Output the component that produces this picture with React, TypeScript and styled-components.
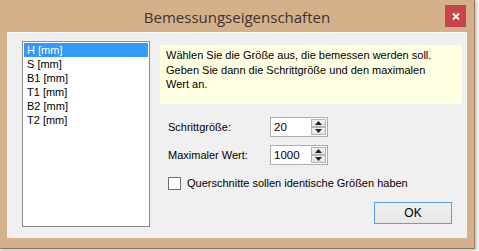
import React from 'react';
import styled, { createGlobalStyle } from 'styled-components';

const GlobalStyle = createGlobalStyle`
  html, body {
    margin: 0;
    padding: 0;
    background: #f3f3f3;
  }
  body {
    width: 479px;
    height: 251px;
    overflow: hidden;
  }
`;

const Window = styled.div`
  width: 474px;
  height: 248px;
  display: flex;
  flex-direction: column;
  background: #d5b18b;
  border-right: 1px solid #8f7a64;
  border-bottom: 1px solid #8f7a64;
  box-shadow: 1px 1px 3px rgba(0, 0, 0, 0.25);
`;

const TitleBar = styled.div`
  height: 32px;
  display: grid;
  grid-template-columns: 1fr auto 1fr;
  align-items: center;
`;

const Title = styled.div`
  grid-column: 2;
  font-family: 'Open Sans', 'Noto Sans', sans-serif;
  font-size: 15px;
  color: #3a3530;
  padding-top: 1px;
`;

const CloseButton = styled.div`
  grid-column: 3;
  justify-self: end;
  align-self: start;
  margin: 5px 8px 0 0;
  width: 21px;
  height: 22px;
  background: #c7464a;
  display: flex;
  align-items: center;
  justify-content: center;
`;

const Client = styled.div`
  flex: 1;
  margin: 0 7px 10px 7px;
  background: #f0f0f0;
  border-top: 1px solid #fbfbfb;
  display: flex;
  padding: 8px 5px 0 15px;
  font-family: 'Liberation Sans', Arial, sans-serif;
  font-size: 11px;
  color: #000;
`;

const ListBox = styled.div`
  width: 126px;
  height: 182px;
  background: #fff;
  border: 1px solid #8c8c8c;
  padding: 1px 0;
`;

const ListItem = styled.div<{ $selected?: boolean }>`
  height: 14px;
  line-height: 14px;
  margin: 0 1px;
  padding-left: 3px;
  background: ${p => (p.$selected ? '#3399ff' : 'transparent')};
  color: ${p => (p.$selected ? '#fff' : '#000')};
`;

const RightColumn = styled.div`
  flex: 1;
  margin-left: 10px;
  display: flex;
  flex-direction: column;
`;

const InfoBox = styled.div`
  margin-top: 4px;
  height: 59px;
  box-sizing: border-box;
  background: #ffffe1;
  padding: 3px 6px 0;
  line-height: 14.5px;
`;

const FormRow = styled.div<{ $top: number }>`
  display: flex;
  align-items: center;
  height: 20px;
  margin-top: ${p => p.$top}px;
  padding-left: 8px;
`;

const Label = styled.div`
  width: 102px;
`;

const Spin = styled.div`
  width: 56px;
  height: 18px;
  border: 1px solid #abadb3;
  background: #fff;
  display: flex;
`;

const SpinValue = styled.div`
  flex: 1;
  padding-left: 3px;
  line-height: 18px;
  font-size: 11.5px;
`;

const SpinButtons = styled.div`
  width: 15px;
  margin: 1px 1px 1px 0;
  display: flex;
  flex-direction: column;
  gap: 0;
`;

const SpinArrow = styled.div`
  flex: 1;
  border: 1px solid #b5b5b5;
  background: linear-gradient(#f4f4f4, #e3e3e3);
  display: flex;
  align-items: center;
  justify-content: center;
`;

const CheckRow = styled.label`
  display: flex;
  align-items: center;
  gap: 6px;
  margin-top: 11px;
  padding-left: 8px;
  height: 14px;
`;

const CheckBox = styled.span`
  width: 11px;
  height: 11px;
  border: 1px solid #707070;
  background: #fff;
`;

const ButtonRow = styled.div`
  display: flex;
  justify-content: flex-end;
  margin-top: 12px;
  padding-right: 10px;
`;

const OkButton = styled.div`
  width: 76px;
  height: 20px;
  border: 1px solid #5b9ee6;
  background: linear-gradient(#f0f0f0, #e6e6e6);
  display: flex;
  align-items: center;
  justify-content: center;
  font-size: 12px;
`;

const Triangle = ({ up }: { up?: boolean }) => (
  <svg width="7" height="4" viewBox="0 0 7 4">
    <path d={up ? 'M0 4 L3.5 0 L7 4 Z' : 'M0 0 L3.5 4 L7 0 Z'} fill="#222" />
  </svg>
);

const SpinBox = ({ value }: { value: string }) => (
  <Spin>
    <SpinValue>{value}</SpinValue>
    <SpinButtons>
      <SpinArrow><Triangle up /></SpinArrow>
      <SpinArrow><Triangle /></SpinArrow>
    </SpinButtons>
  </Spin>
);

const items = ['H [mm]', 'S [mm]', 'B1 [mm]', 'T1 [mm]', 'B2 [mm]', 'T2 [mm]'];

export default function App() {
  return (
    <>
      <GlobalStyle />
      <Window>
        <TitleBar>
          <Title>Bemessungseigenschaften</Title>
          <CloseButton>
            <svg width="8" height="7" viewBox="0 0 8 7">
              <path d="M1 0.5 L7 6.5 M7 0.5 L1 6.5" stroke="#fff" strokeWidth="1.8" />
            </svg>
          </CloseButton>
        </TitleBar>
        <Client>
          <ListBox>
            {items.map((it, i) => (
              <ListItem key={it} $selected={i === 0}>{it}</ListItem>
            ))}
          </ListBox>
          <RightColumn>
            <InfoBox>
              Wählen Sie die Größe aus, die bemessen werden soll.<br />
              Geben Sie dann die Schrittgröße und den maximalen<br />
              Wert an.
            </InfoBox>
            <FormRow $top={13}>
              <Label>Schrittgröße:</Label>
              <SpinBox value="20" />
            </FormRow>
            <FormRow $top={8}>
              <Label>Maximaler Wert:</Label>
              <SpinBox value="1000" />
            </FormRow>
            <CheckRow>
              <CheckBox />
              Querschnitte sollen identische Größen haben
            </CheckRow>
            <ButtonRow>
              <OkButton>OK</OkButton>
            </ButtonRow>
          </RightColumn>
        </Client>
      </Window>
    </>
  );
}
